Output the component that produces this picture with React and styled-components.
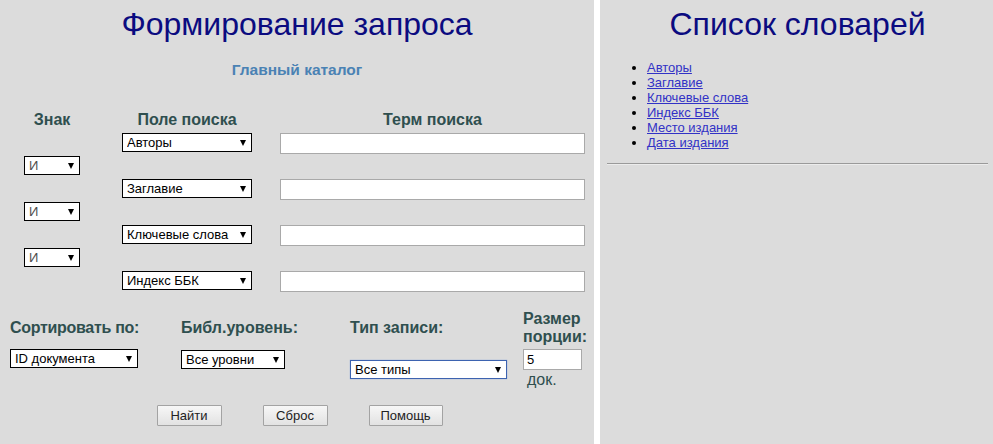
import React from 'react';
import styled, { createGlobalStyle } from 'styled-components';

const GlobalStyle = createGlobalStyle`
  html, body {
    margin: 0;
    padding: 0;
    background: #ffffff;
  }
  body {
    font-family: "Liberation Sans", Arial, sans-serif;
  }
`;

const Page = styled.div`
  display: flex;
  gap: 6px;
  min-height: 444px;
  background: #ffffff;
`;

const LeftPanel = styled.div`
  width: 594px;
  flex-shrink: 0;
  background: #dcdcdc;
`;

const RightPanel = styled.div`
  flex: 1;
  background: #dcdcdc;
  padding: 0 5px 0 7px;
`;

const Title = styled.h1`
  margin: 6px 0 0;
  font-size: 32px;
  line-height: 36px;
  font-weight: normal;
  color: #0b0b80;
  text-align: center;
`;

const Catalog = styled.h3`
  margin: 19px 0 0;
  font-size: 15.5px;
  line-height: 18px;
  font-weight: bold;
  color: #4a82b4;
  text-align: center;
`;

const SearchGrid = styled.div`
  display: grid;
  grid-template-columns: 84px 186px 305px;
  grid-template-rows: 20px repeat(7, 23px);
  margin: 32px 0 0 10px;
  align-items: start;
`;

const HeadCell = styled.div`
  font-size: 16px;
  line-height: 18px;
  font-weight: bold;
  color: #2f4f4f;
  text-align: center;
`;

const Cell = styled.div`
  padding-top: 2px;
  display: flex;
  justify-content: ${({ $stretch }) => ($stretch ? 'stretch' : 'center')};
`;

const SelectWrap = styled.div`
  position: relative;
  width: ${({ $w }) => $w}px;

  &::after {
    content: '';
    position: absolute;
    right: 6px;
    top: 7px;
    border-left: 3.5px solid transparent;
    border-right: 3.5px solid transparent;
    border-top: 6px solid #000;
    pointer-events: none;
  }
`;

const Select = styled.select`
  appearance: none;
  -webkit-appearance: none;
  display: block;
  width: 100%;
  height: 19px;
  margin: 0;
  padding: 0 14px 0 4px;
  border: 1px solid ${({ $focus }) => ($focus ? '#3d63b0' : '#000')};
  box-shadow: ${({ $focus }) => ($focus ? '0 0 1px #7a9ad8' : 'none')};
  border-radius: 0;
  background: #fff;
  font-family: "Liberation Sans", Arial, sans-serif;
  font-size: 13px;
  line-height: 17px;
  color: ${({ $muted }) => ($muted ? '#505050' : '#000')};
  outline: none;
`;

const TextInput = styled.input`
  box-sizing: border-box;
  width: ${({ $w }) => ($w ? `${$w}px` : '100%')};
  height: 21px;
  margin: 0;
  padding: 0 3px;
  border: 1px solid #a9a9a9;
  background: #fff;
  font-family: "Liberation Sans", Arial, sans-serif;
  font-size: 13px;
  color: #000;
  outline: none;
`;

const OptionsGrid = styled.div`
  display: grid;
  grid-template-columns: 171px 169px 173px 62px;
  grid-template-rows: 36px auto;
  row-gap: 3px;
  margin: 18px 0 0 10px;
`;

const Label = styled.div`
  align-self: center;
  font-size: 16px;
  line-height: 18px;
  font-weight: bold;
  color: #2f4f4f;
  letter-spacing: ${({ $tight }) => ($tight ? '-0.3px' : '0')};
`;

const OptionCell = styled.div`
  align-self: ${({ $align }) => $align || 'start'};
  margin-top: ${({ $top }) => $top || 0}px;
`;

const Unit = styled.div`
  padding-left: 4px;
  font-size: 16px;
  line-height: 19px;
  color: #2f4f4f;
`;

const ButtonRow = styled.div`
  display: flex;
  justify-content: center;
  gap: 41px;
  margin-top: 16px;
  padding-left: 5px;
`;

const Button = styled.button`
  width: ${({ $w }) => $w}px;
  height: 21px;
  padding: 0;
  border: 1px solid #a3a3a3;
  border-radius: 1px;
  background: linear-gradient(#f7f7f7, #e2e2e2);
  font-family: "Liberation Sans", Arial, sans-serif;
  font-size: 13px;
  color: #222;
`;

const DictList = styled.ul`
  margin: 18px 0 0;
  padding-left: 40px;
  font-size: 13px;
  line-height: 15px;
  color: #000;
`;

const DictLink = styled.a`
  color: #3232c6;
  text-decoration: underline;
`;

const Rule = styled.hr`
  margin: 13px 0 0;
  height: 0;
  border: none;
  border-top: 1px solid #9a9a9a;
  border-bottom: 1px solid #ececec;
`;

const fields = ['Авторы', 'Заглавие', 'Ключевые слова', 'Индекс ББК'];
const dictionaries = ['Авторы', 'Заглавие', 'Ключевые слова', 'Индекс ББК', 'Место издания', 'Дата издания'];

const FieldSelect = ({ value, width, focus }) => (
  <SelectWrap $w={width}>
    <Select defaultValue={value} $muted={value === 'И'} $focus={focus}>
      <option>{value}</option>
    </Select>
  </SelectWrap>
);

const App = () => {
  const rows = [];
  fields.forEach((field, i) => {
    rows.push(
      <React.Fragment key={`f${i}`}>
        <Cell />
        <Cell>
          <FieldSelect value={field} width={130} />
        </Cell>
        <Cell $stretch>
          <TextInput />
        </Cell>
      </React.Fragment>
    );
    if (i < fields.length - 1) {
      rows.push(
        <React.Fragment key={`o${i}`}>
          <Cell>
            <FieldSelect value="И" width={56} />
          </Cell>
          <Cell />
          <Cell />
        </React.Fragment>
      );
    }
  });

  return (
    <>
      <GlobalStyle />
      <Page>
        <LeftPanel>
          <Title>Формирование запроса</Title>
          <Catalog>Главный каталог</Catalog>
          <SearchGrid>
            <HeadCell>Знак</HeadCell>
            <HeadCell>Поле поиска</HeadCell>
            <HeadCell>Терм поиска</HeadCell>
            {rows}
          </SearchGrid>
          <OptionsGrid>
            <Label $tight>Сортировать по:</Label>
            <Label>Библ.уровень:</Label>
            <Label>Тип записи:</Label>
            <Label>Размер порции:</Label>
            <OptionCell>
              <FieldSelect value="ID документа" width={128} />
            </OptionCell>
            <OptionCell $top={1}>
              <FieldSelect value="Все уровни" width={104} />
            </OptionCell>
            <OptionCell $align="center">
              <FieldSelect value="Все типы" width={157} focus />
            </OptionCell>
            <OptionCell>
              <TextInput $w={59} defaultValue="5" />
              <Unit>док.</Unit>
            </OptionCell>
          </OptionsGrid>
          <ButtonRow>
            <Button $w={65}>Найти</Button>
            <Button $w={65}>Сброс</Button>
            <Button $w={74}>Помощь</Button>
          </ButtonRow>
        </LeftPanel>
        <RightPanel>
          <Title>Список словарей</Title>
          <DictList>
            {dictionaries.map((d) => (
              <li key={d}>
                <DictLink href="#">{d}</DictLink>
              </li>
            ))}
          </DictList>
          <Rule />
        </RightPanel>
      </Page>
    </>
  );
};

export default App;
